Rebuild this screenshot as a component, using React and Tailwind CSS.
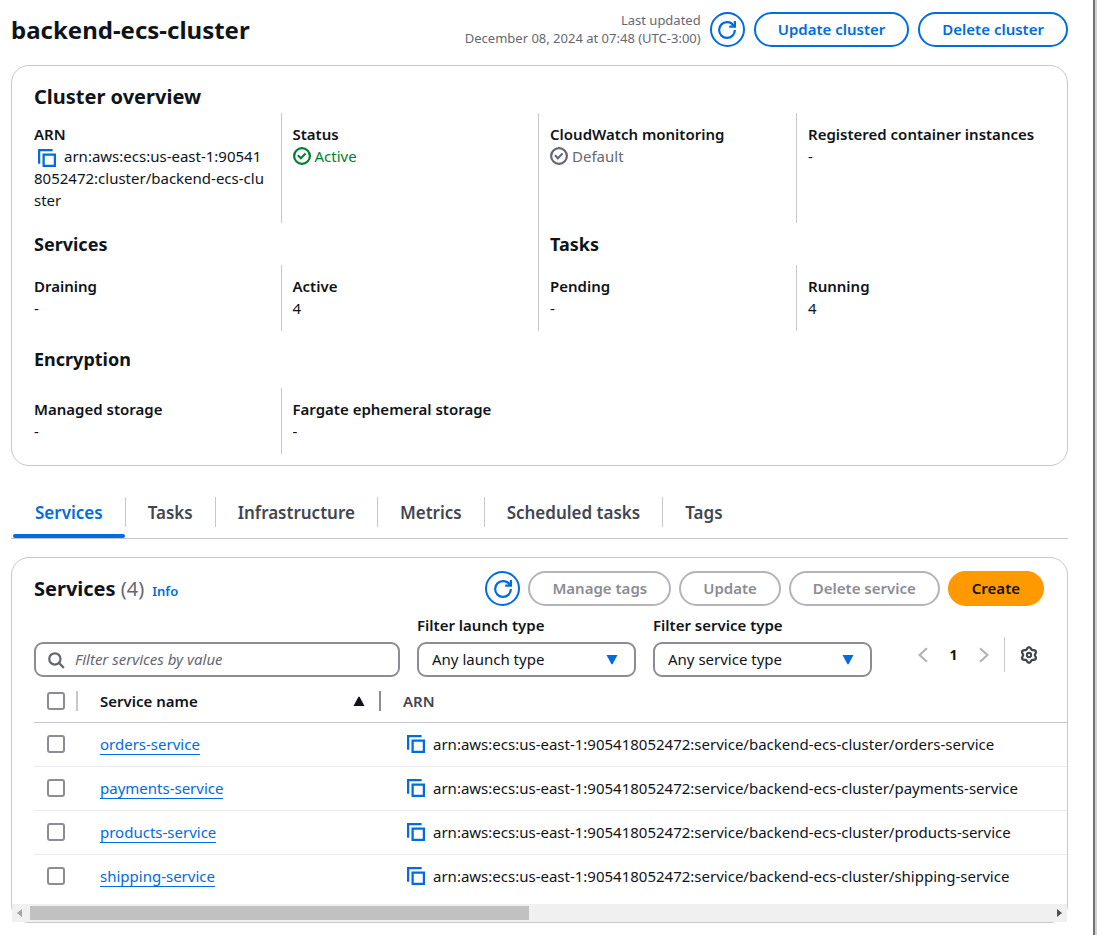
import { useState } from 'react';

const SERVICES = ['orders-service', 'payments-service', 'products-service', 'shipping-service'];
const ARN_PREFIX = 'arn:aws:ecs:us-east-1:905418052472:service/backend-ecs-cluster/';
const TABS = ['Services', 'Tasks', 'Infrastructure', 'Metrics', 'Scheduled tasks', 'Tags'];

// Outline of a six-lobed gear, sampled every five degrees.
const GEAR_PATH =
  'M' +
  Array.from({ length: 72 }, (_, i) => {
    const a = (i * Math.PI) / 36;
    const r = 6.05 + 0.85 * Math.cos(6 * a);
    return (8 + r * Math.sin(a)).toFixed(2) + ' ' + (8 - r * Math.cos(a)).toFixed(2);
  }).join('L') +
  'Z';

function RefreshIcon() {
  return (
    <svg viewBox="0 0 16 16" className="size-[18px]" fill="none" stroke="currentColor" strokeWidth="2" aria-hidden="true">
      <path d="M10 5h5V0" />
      <path d="M15 8a6.957 6.957 0 0 1-7 7 6.957 6.957 0 0 1-7-7 6.957 6.957 0 0 1 7-7 6.87 6.87 0 0 1 6.3 4" />
    </svg>
  );
}

function CopyIcon() {
  return (
    <svg viewBox="0 0 16 16" className="size-[18px]" fill="none" stroke="currentColor" strokeWidth="2" aria-hidden="true">
      <path d="M15 5H5v10h10V5Z" />
      <path d="M13 1H1v12" />
    </svg>
  );
}

function CheckCircleIcon() {
  return (
    <svg viewBox="0 0 16 16" className="size-[18px] shrink-0" fill="none" stroke="currentColor" strokeWidth="2" aria-hidden="true">
      <circle cx="8" cy="8" r="7" />
      <path d="m5 8 2 2 3.521-3.521" strokeLinecap="square" strokeWidth="1.8" />
    </svg>
  );
}

function SearchIcon() {
  return (
    <svg viewBox="0 0 16 16" className="size-[18px] shrink-0" fill="none" stroke="currentColor" strokeWidth="2" aria-hidden="true">
      <circle cx="7" cy="7" r="5" />
      <path d="m15 15-4.5-4.5" />
    </svg>
  );
}

function GearIcon() {
  return (
    <svg viewBox="0 0 16 16" className="size-[18px]" fill="none" stroke="currentColor" strokeWidth="2" strokeLinejoin="round" aria-hidden="true">
      <path d={GEAR_PATH} />
      <circle cx="8" cy="8" r="1.9" strokeWidth="1.8" />
    </svg>
  );
}

function Chevron({ flip }) {
  return (
    <svg viewBox="0 0 16 16" className="size-[18px]" fill="none" stroke="currentColor" strokeWidth="2" aria-hidden="true">
      <path d={flip ? 'M11.500 2 5 8l6.500 6' : 'm4.500 2 6.500 6-6.500 6'} />
    </svg>
  );
}

function CopyButton({ label }) {
  return (
    <button type="button" aria-label={label} className="ml-1 mr-2 inline-flex align-middle text-[#006ce0]">
      <CopyIcon />
    </button>
  );
}

function RoundRefresh() {
  return (
    <button type="button" aria-label="Refresh" className="flex size-[35px] shrink-0 items-center justify-center rounded-full border-2 border-[#006ce0] text-[#006ce0]">
      <RefreshIcon />
    </button>
  );
}

function Button({ kind = 'normal', children }) {
  const styles = {
    normal: 'border-[#006ce0] text-[#006ce0]',
    disabled: 'border-[#b4b4bb] text-[#8c8c94]',
    primary: 'border-[#ff9900] bg-[#ff9900] text-[#0f141a]',
  };
  return (
    <button
      type="button"
      disabled={kind === 'disabled'}
      className={'h-[35px] shrink-0 rounded-full border-2 px-[22px] pb-0.5 font-semibold leading-[22px] whitespace-nowrap ' + styles[kind]}
    >
      {children}
    </button>
  );
}

function Field({ label, divider, children }) {
  return (
    <div className={'min-w-0 pb-3 pl-[11px] pr-[14px] pt-[10px] ' + (divider ? 'border-l border-[#c6c6cd]' : '')}>
      <div className="font-semibold">{label}</div>
      <div>{children}</div>
    </div>
  );
}

function Filter({ id, label, option }) {
  return (
    <div className="w-[219px] shrink-0">
      <label htmlFor={id} className="mb-[6px] block font-semibold">{label}</label>
      <div className="relative">
        <select id={id} className="block h-[35px] w-full appearance-none rounded-[9px] border-2 border-[#8c8c94] bg-white pb-0.5 pl-[13px] pr-10">
          <option>{option}</option>
        </select>
        <svg viewBox="0 0 12 10" className="pointer-events-none absolute right-[18px] top-[13px] h-[10px] w-3 text-[#006ce0]" fill="currentColor" aria-hidden="true">
          <path d="M0.500 0h11L6.700 9q-.7.800-1.400 0Z" />
        </svg>
      </div>
    </div>
  );
}

function Checkbox({ label }) {
  return (
    <input
      type="checkbox"
      aria-label={label}
      className="block size-[18px] appearance-none rounded-[3px] border-2 border-[#8c8c94] bg-white checked:bg-[#006ce0]"
    />
  );
}

export default function App() {
  const [tab, setTab] = useState('Services');
  return (
    <div className="flex min-h-screen bg-white font-['Noto_Sans',sans-serif] text-[15px] leading-[22px] text-[#0f141a]">
      <main className="min-w-0 flex-1 pb-3 pl-[11px] pr-[25px] pt-3">
        <header className="flex h-[35px] items-center justify-between">
          <h1 className="text-2xl font-bold">backend-ecs-cluster</h1>
          <div className="flex items-center gap-[9px]">
            <p className="pb-0.5 text-right text-[13px] leading-[18px] text-[#656871]">
              Last updated
              <br />
              December 08, 2024 at 07:48 (UTC-3:00)
            </p>
            <RoundRefresh />
            <Button>Update cluster</Button>
            <Button>Delete cluster</Button>
          </div>
        </header>

        <section className="mt-[18px] rounded-[18px] border border-[#c6c6cd] pb-[11px] pl-[11px] pr-[14px]">
          <h2 className="flex h-[47px] items-end pb-0.5 pl-[11px] text-xl font-bold">Cluster overview</h2>
          <div className="grid grid-cols-2">
            <div>
              <div className="grid grid-cols-2">
                <Field label="ARN">
                  <span className="break-all">
                    <CopyButton label="Copy cluster ARN" />
                    arn:aws:ecs:us-east-1:905418052472:cluster/backend-ecs-cluster
                  </span>
                </Field>
                <Field label="Status" divider>
                  <span className="flex items-center gap-1 text-[#00802f]">
                    <CheckCircleIcon />
                    Active
                  </span>
                </Field>
              </div>
              <h3 className="flex h-[42px] items-center pl-[11px] text-lg font-bold">Services</h3>
              <div className="grid grid-cols-2">
                <Field label="Draining">-</Field>
                <Field label="Active" divider>4</Field>
              </div>
            </div>
            <div className="flex flex-col justify-between border-l border-[#c6c6cd]">
              <div className="grid flex-1 grid-cols-2">
                <Field label="CloudWatch monitoring">
                  <span className="flex items-center gap-1 text-[#656871]">
                    <CheckCircleIcon />
                    Default
                  </span>
                </Field>
                <Field label="Registered container instances" divider>-</Field>
              </div>
              <h3 className="flex h-[42px] items-center pl-[11px] text-lg font-bold">Tasks</h3>
              <div className="grid grid-cols-2">
                <Field label="Pending">-</Field>
                <Field label="Running" divider>4</Field>
              </div>
            </div>
          </div>
          <h3 className="flex h-[57px] items-center pb-0.5 pl-[11px] text-lg font-bold">Encryption</h3>
          <div className="grid grid-cols-4">
            <Field label="Managed storage">-</Field>
            <Field label="Fargate ephemeral storage" divider>-</Field>
          </div>
        </section>

        <div role="tablist" className="mt-[27px] flex border-b border-[#c6c6cd] pl-0.5">
          {TABS.map((name, i) => (
            <div key={name} className="flex items-start">
              {i > 0 && <span className="mt-1 h-[30px] w-px bg-[#c6c6cd]" />}
              <button
                type="button"
                role="tab"
                aria-selected={tab === name}
                onClick={() => setTab(name)}
                className={'flex flex-col text-[17px] font-semibold ' + (tab === name ? 'text-[#006ce0]' : 'text-[#424650]')}
              >
                <span className="flex h-[41px] items-center px-[22px] pb-0.5">{name}</span>
                <span className={'h-1 w-full rounded-full ' + (tab === name ? 'bg-[#006ce0]' : 'bg-transparent')} />
              </button>
            </div>
          ))}
        </div>

        <section className="mt-[18px] rounded-[18px] border border-[#c6c6cd]">
          <div className="flex items-center justify-between pl-[22px] pr-[23px] pt-[13px]">
            <div className="flex items-baseline gap-2">
              <h2 className="text-xl font-bold">
                Services <span className="font-normal text-[#656871]">(4)</span>
              </h2>
              <a href="#info" className="text-[13px] font-semibold text-[#006ce0]">Info</a>
            </div>
            <div className="flex gap-2">
              <RoundRefresh />
              <Button kind="disabled">Manage tags</Button>
              <Button kind="disabled">Update</Button>
              <Button kind="disabled">Delete service</Button>
              <Button kind="primary">Create</Button>
            </div>
          </div>

          <div className="mt-2 flex items-end gap-[17px] pl-[22px] pr-[29px]">
            <div className="flex h-[35px] min-w-0 flex-1 items-center gap-[10px] rounded-[9px] border-2 border-[#8c8c94] pl-[11px] text-[#656871]">
              <SearchIcon />
              <input
                type="text"
                aria-label="Filter services by value"
                placeholder="Filter services by value"
                className="min-w-0 flex-1 bg-transparent pb-0.5 outline-none placeholder:italic placeholder:text-[#656871]"
              />
            </div>
            <Filter id="launch-type" label="Filter launch type" option="Any launch type" />
            <Filter id="service-type" label="Filter service type" option="Any service type" />
            <nav aria-label="Pages" className="mb-[5px] ml-[25px] flex h-[35px] shrink-0 items-center text-[#b4b4bb]">
              <button type="button" disabled aria-label="Previous page"><Chevron flip /></button>
              <button type="button" className="w-[43px] text-center text-sm font-bold text-[#0f141a]">1</button>
              <button type="button" disabled aria-label="Next page"><Chevron /></button>
              <span className="ml-[11px] mr-[15px] h-[35px] w-px bg-[#c6c6cd]" />
              <button type="button" aria-label="Preferences" className="text-[#424650]"><GearIcon /></button>
            </nav>
          </div>

          <div className="pl-[22px]">
            <table className="w-full table-fixed border-collapse text-left">
              <colgroup>
                <col className="w-[44px]" />
                <col className="w-[303px]" />
                <col />
              </colgroup>
              <thead>
                <tr className="h-[45px] border-b border-[#c6c6cd]">
                  <th className="p-0 pt-[3px]">
                    <div className="flex h-5 items-center border-r-2 border-[#c6c6cd] pl-[13px]">
                      <Checkbox label="Select all services" />
                    </div>
                  </th>
                  <th className="p-0 pt-[3px] font-semibold" aria-sort="ascending">
                    <div className="flex h-5 items-center justify-between border-r-2 border-[#8c8c94] pl-[22px] pr-[14px]">
                      Service name
                      <svg viewBox="0 0 12 10" className="h-[10px] w-3" fill="currentColor" aria-hidden="true">
                        <path d="M0.500 10h11L6.700 1q-.7-.800-1.400 0Z" />
                      </svg>
                    </div>
                  </th>
                  <th className="pb-0 pl-[22px] pt-[3px] font-semibold text-[#424650]">ARN</th>
                </tr>
              </thead>
              <tbody>
                {SERVICES.map((name) => (
                  <tr key={name} className="h-11 border-b border-[#ebebf0] last:border-b-0">
                    <td className="py-0 pl-[13px]"><Checkbox label={'Select ' + name} /></td>
                    <td className="pb-px pl-[22px] pt-0">
                      <a href={'#' + name} className="inline-block border-b border-[#006ce0] leading-5 text-[#006ce0]">{name}</a>
                    </td>
                    <td className="truncate pb-0.5 pl-[22px] pt-0">
                      <CopyButton label={'Copy ARN of ' + name} />
                      <span className="align-middle">{ARN_PREFIX + name}</span>
                    </td>
                  </tr>
                ))}
              </tbody>
            </table>
          </div>

          <div className="mt-[6px] flex h-[18px] items-center bg-[#f0f0f0] px-[5px]" aria-hidden="true">
            <svg viewBox="0 0 5 8" className="h-2 w-[5px] text-[#a3a3a3]" fill="currentColor"><path d="M5 0v8L0 4Z" /></svg>
            <div className="mx-2 flex-1"><div className="h-[14px] w-[49%] bg-[#c1c1c1]" /></div>
            <svg viewBox="0 0 5 8" className="h-2 w-[5px] text-[#505050]" fill="currentColor"><path d="M0 0v8l5-4Z" /></svg>
          </div>
        </section>
      </main>
      <div className="w-1 shrink-0 border-l-2 border-[#707274] bg-[#d0d2d4]" />
    </div>
  );
}
